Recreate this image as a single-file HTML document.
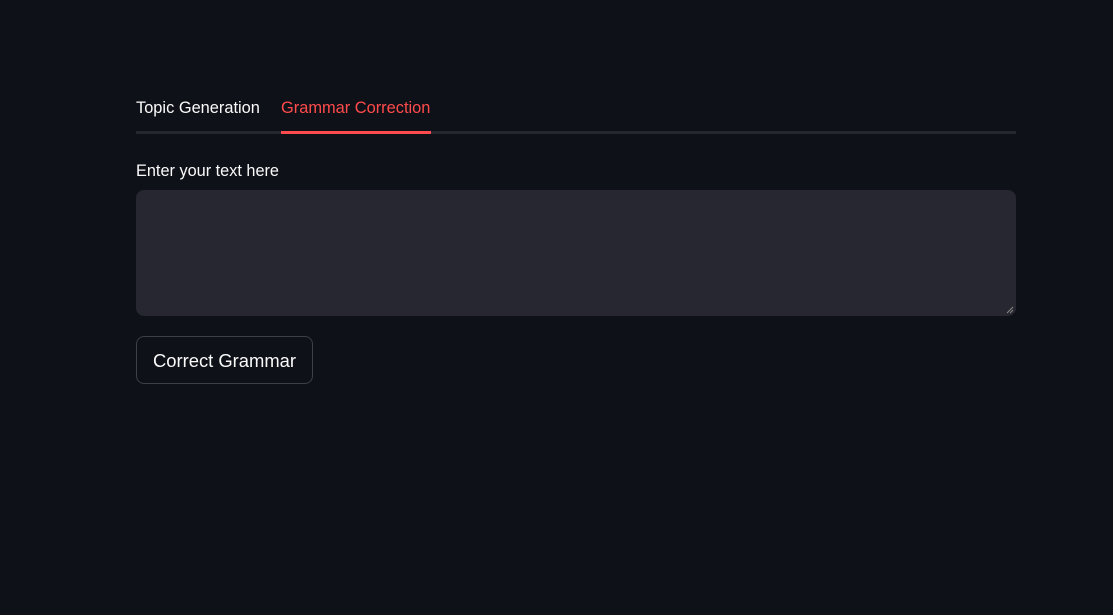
<!DOCTYPE html>
<html><head><style>
html,body{margin:0;padding:0;background:#0e1117;width:1113px;height:615px;overflow:hidden;font-family:"Liberation Sans",sans-serif;}
.tabs{position:absolute;left:136px;top:96px;width:880px;height:38px;}
.tabs .line{position:absolute;left:0;right:0;top:35px;height:3px;background:#262730;}
.tab{position:absolute;top:3px;font-size:16.4px;color:#fafafa;white-space:nowrap}
.t1{left:0}
.t2{left:145px;color:#ff4b4b}
.ul{position:absolute;left:145px;top:35px;width:150px;height:3px;background:#ff4b4b}
.label{position:absolute;left:136px;top:162px;font-size:16.3px;color:#fafafa}
.ta{position:absolute;left:136px;top:190px;width:880px;height:126px;background:#262730;border-radius:8px}
.btn{position:absolute;left:136px;top:336px;width:175px;height:46px;border:1px solid #3d3f49;border-radius:8px;color:#fafafa;font-size:18.4px;line-height:47px;text-align:center;box-sizing:content-box;white-space:nowrap}
</style></head><body>
<div class="tabs"><div class="line"></div><div class="tab t1">Topic Generation</div><div class="tab t2">Grammar Correction</div><div class="ul"></div></div>
<div class="label">Enter your text here</div>
<div class="ta"><svg style="position:absolute;right:2px;bottom:2px" width="8" height="8"><path d="M1 7L7 1M4 7L7 4" stroke="#888" stroke-width="1"/></svg></div>
<div class="btn">Correct Grammar</div>
</body></html>
